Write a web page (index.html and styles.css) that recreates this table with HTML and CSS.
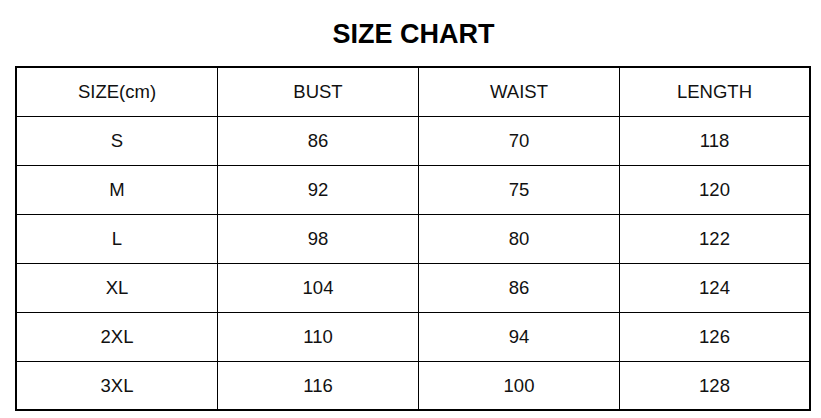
FILE: index.html
```html
<!DOCTYPE html>
<html>
<head>
<meta charset="utf-8">
<link rel="stylesheet" href="styles.css">
</head>
<body>
<h1 class="title">SIZE CHART</h1>
<div class="chart">
  <div class="cell">SIZE(cm)</div><div class="cell">BUST</div><div class="cell">WAIST</div><div class="cell">LENGTH</div>
  <div class="cell">S</div><div class="cell">86</div><div class="cell">70</div><div class="cell">118</div>
  <div class="cell">M</div><div class="cell">92</div><div class="cell">75</div><div class="cell">120</div>
  <div class="cell">L</div><div class="cell">98</div><div class="cell">80</div><div class="cell">122</div>
  <div class="cell">XL</div><div class="cell">104</div><div class="cell">86</div><div class="cell">124</div>
  <div class="cell">2XL</div><div class="cell">110</div><div class="cell">94</div><div class="cell">126</div>
  <div class="cell">3XL</div><div class="cell">116</div><div class="cell">100</div><div class="cell">128</div>
</div>
</body>
</html>
```
FILE: styles.css
```css
html, body {
  margin: 0;
  padding: 0;
  background: #fff;
  overflow: hidden;
}
body {
  font-family: "Liberation Sans", Arial, sans-serif;
  color: #111;
}
.title {
  margin: 0;
  padding-top: 19px;
  height: 30px;
  line-height: 30px;
  font-size: 27px;
  font-weight: bold;
  text-align: center;
  color: #000;
  padding-left: 6px;
}
.chart {
  margin: 17px 0 0 15px;
  width: 796px;
  box-sizing: border-box;
  border: 2px solid #000;
  display: grid;
  grid-template-columns: 201px 201px 201px 189px;
  grid-template-rows: repeat(6, 49px) 47px;
}
.cell {
  box-sizing: border-box;
  border-right: 1px solid #000;
  border-bottom: 1px solid #000;
  display: flex;
  align-items: center;
  justify-content: center;
  font-size: 18.5px;
}
.cell:nth-child(4n) {
  border-right: none;
}
.cell:nth-last-child(-n+4) {
  border-bottom: none;
}
```
